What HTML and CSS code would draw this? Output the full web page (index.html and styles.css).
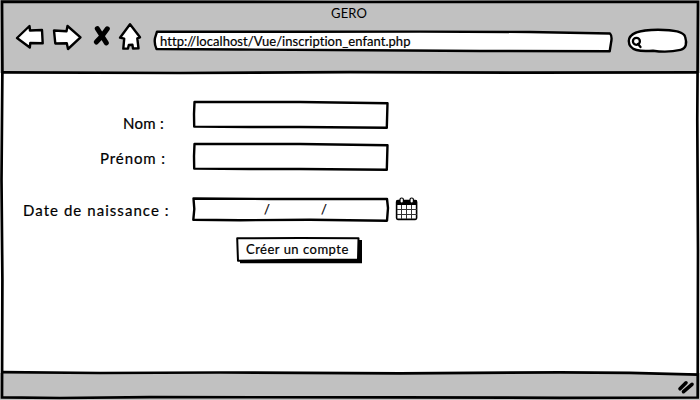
FILE: index.html
```html
<!DOCTYPE html>
<html lang="fr">
<head>
<meta charset="utf-8">
<title>GERO</title>
<link rel="stylesheet" href="styles.css">
</head>
<body>
<div class="window">
  <header class="chrome">
    <div class="title">GERO</div>
    <nav class="toolbar">
      <svg class="icon back" viewBox="14 22 32 30"><path class="shape" d="M17 38L29.5 26L30 30.5L42 30L42.7 43.3L30.3 43L29.8 47.5Z"/></svg>
      <svg class="icon forward" viewBox="51 22 32 30"><path class="shape" d="M54 30.5L66.5 31.3L67.5 26L80.5 37.3L68 49L66.8 43.2L55.3 43.5Z"/></svg>
      <svg class="icon stop" viewBox="92 22 20 30"><path d="M97.3 28.7L102 36L106.3 42.8M107.3 28.8L102 36L96.3 42"/></svg>
      <svg class="icon home" viewBox="117 22 26 30"><path class="shape" d="M130 24.3L140 37.3L137.3 38.3L138.5 48.3L133 48.5L132.4 44.7L128.8 45L128 48.5L123.3 48.6L124.2 38.7L120 37.7Z"/></svg>
      <div class="address">
        <svg class="sketch" viewBox="153 29 460 25"><path class="shape" d="M157 31.7L300 31.8L420 31.6L530 32L610 33.5Q612.5 36 611 43L609.7 51.2L480 51L370 50.3L240 49.5L156.5 49Q154 44 155 38Z"/></svg>
        <span class="url">http://localhost/Vue/inscription_enfant.php</span>
      </div>
      <svg class="icon search" viewBox="627 27 62 28"><path class="shape" d="M628.8 41C629 31.5 645 29.7 658 29.7C674 29.7 684 31.5 685.2 37C687 43 686.5 48.5 680.5 49.8C670 52.3 662 52 653 50.7C641 51.8 629 51 628.8 41Z"/><circle class="lens" cx="636.4" cy="41.3" r="3.5"/><path class="lens" d="M638 44L640.5 47"/></svg>
    </nav>
  </header>

  <main class="form">
    <div class="row name">
      <label class="label l-nom">Nom :</label>
      <svg class="field" viewBox="191 99 200 32"><path class="shape" d="M194.5 102L300 102L387.5 103.3L386.8 127.8L300 127L250 127L194.2 126.6L194 114Z"/></svg>
    </div>
    <div class="row surname">
      <label class="label l-prenom">Prénom :</label>
      <svg class="field" viewBox="191 99 200 32"><path class="shape" d="M194.5 102L300 102L387.5 103.3L386.8 127.8L300 127L250 127L194.2 126.6L194 114Z"/></svg>
    </div>
    <div class="row birth">
      <label class="label l-date">Date de naissance :</label>
      <div class="date">
        <svg class="sketch" viewBox="190 195 201 29"><path class="shape" d="M193.5 198.5L270 199L387 199L388 208L387 220.7L310 219.7L240 220.2L193.3 219.8L194.3 209Z"/></svg>
        <span class="slash s1">/</span><span class="slash s2">/</span>
      </div>
      <svg class="calendar" viewBox="395 196 24 26"><rect class="sheet" x="396.6" y="200.6" width="20" height="18.8" rx="1.3"/><path class="band" d="M396.5 200.5H417V205H396.5Z"/><path class="grid" d="M401.5 205V219M406.5 205V219M411.5 205V219M397 209.5H417M397 214.5H417"/><rect class="ring" x="400" y="198" width="3.4" height="5" rx="1.6"/><rect class="ring" x="410" y="198" width="3.4" height="5" rx="1.6"/></svg>
    </div>
    <button class="submit" type="button">
      <svg class="sketch" viewBox="235 236 128 29"><path d="M240 240H362V263.3H240Z"/><path class="shape thin" d="M237.2 238.3L300 238L358.5 238.3L358 259.5L300 259.8L238 260.7L237.6 250Z"/></svg>
      <span class="caption">Créer un compte</span>
    </button>
  </main>

  <footer class="status">
    <svg class="grip" viewBox="676 378 20 18"><path d="M680 388.8L686 382.8M683.5 391.7L692 384.3"/></svg>
  </footer>

  <svg class="frame" viewBox="0 0 700 400"><path d="M2 1.7L350 2L698 1.8L697.3 120L698 250L697.7 397.5L560 397.8L400 397.3L150 397.2L60 398L2 397.3L2.4 280L1.5 180L2.4 70Z"/><path d="M2 72.3L180 73L350 72.2L530 72.6L698 72.3M2 372.2L100 373L220 372.5L400 373.4L560 372.3L630 372.8L698 374.7"/></svg>
</div>
</body>
</html>
```
FILE: styles.css
```css
* {
  box-sizing: border-box;
}

body {
  margin: 0;
  background: #fff;
  color: #000;
  font-family: Lato, "Open Sans", sans-serif;
  font-variant-ligatures: none;
  -webkit-text-stroke: 0.2px #000;
}

svg {
  display: block;
  flex: none;
}

.window {
  position: relative;
  display: grid;
  grid-template-rows: 73px 300px 27px;
  width: 700px;
  height: 400px;
  overflow: hidden;
}

.chrome,
.status {
  background: #c1c1c1;
}

.title {
  height: 22px;
  padding: 5px 2px 0 0;
  text-align: center;
  font-size: 13px;
  line-height: 16px;
  letter-spacing: 0.1px;
  -webkit-text-stroke: 0;
}

.toolbar {
  display: flex;
  align-items: flex-start;
  padding-left: 14px;
}

.icon {
  height: 30px;
}

.back { width: 32px; }
.forward { width: 32px; margin-left: 5px; }
.stop { width: 20px; margin-left: 9px; }
.home { width: 26px; margin-left: 5px; }
.search { width: 62px; height: 28px; margin: 5px 0 0 14px; }

.shape {
  fill: #fff;
  stroke: #000;
  stroke-width: 2.4;
  stroke-linejoin: round;
}

.thin {
  stroke-width: 2;
}

.stop path {
  fill: none;
  stroke: #000;
  stroke-width: 5;
  stroke-linecap: round;
  stroke-linejoin: round;
}

.lens {
  fill: none;
  stroke: #000;
  stroke-width: 2.3;
  stroke-linecap: round;
}

.sketch {
  position: absolute;
  inset: 0;
  width: 100%;
  height: 100%;
}

.address {
  position: relative;
  width: 460px;
  height: 25px;
  margin: 7px 0 0 10px;
  padding: 4px 0 0 7px;
}

.url {
  position: relative;
  display: block;
  font-size: 13px;
  line-height: 16px;
  letter-spacing: 0.05px;
  white-space: nowrap;
}

.form {
  display: flex;
  flex-direction: column;
  align-items: flex-start;
  padding-top: 26px;
}

.row {
  display: flex;
  align-items: flex-start;
}

.name { height: 42px; }
.surname { height: 54px; }
.birth { height: 41px; }

.label {
  width: 191px;
  font-size: 15px;
  line-height: 20px;
  white-space: nowrap;
}

.l-nom { padding: 14px 0 0 123px; letter-spacing: 0.3px; }
.l-prenom { padding: 7px 0 0 100px; letter-spacing: 0.9px; }
.l-date { width: 190px; padding: 5px 0 0 23px; letter-spacing: 1.05px; }

.field {
  width: 200px;
  height: 32px;
}

.date {
  position: relative;
  display: flex;
  width: 201px;
  height: 29px;
  padding-top: 6px;
  font-size: 13px;
  line-height: 16px;
}

.slash { position: relative; }
.s1 { margin-left: 74px; }
.s2 { margin-left: 51px; }

.calendar {
  width: 24px;
  height: 26px;
  margin: 1px 0 0 4px;
}

.sheet {
  fill: #fff;
  stroke: #000;
  stroke-width: 1.6;
}

.grid {
  fill: none;
  stroke: #333;
  stroke-width: 1;
}

.ring {
  fill: #fff;
  stroke: #000;
  stroke-width: 1.2;
}

.submit {
  position: relative;
  width: 128px;
  height: 29px;
  margin: 0 0 0 235px;
  padding: 0 0 4px 11px;
  border: 0;
  background: none;
  color: #000;
  font: 13px/16px Lato, "Open Sans", sans-serif;
  letter-spacing: 0.5px;
  text-align: left;
  white-space: nowrap;
}

.caption {
  position: relative;
}

.status {
  display: flex;
  justify-content: flex-end;
  padding: 5px 4px 0 0;
}

.grip {
  width: 20px;
  height: 18px;
}

.grip path {
  fill: none;
  stroke: #000;
  stroke-width: 3.6;
  stroke-linecap: round;
}

.frame {
  position: absolute;
  inset: 0;
  width: 700px;
  height: 400px;
  pointer-events: none;
}

.frame path {
  fill: none;
  stroke: #000;
  stroke-width: 2.7;
}
```
